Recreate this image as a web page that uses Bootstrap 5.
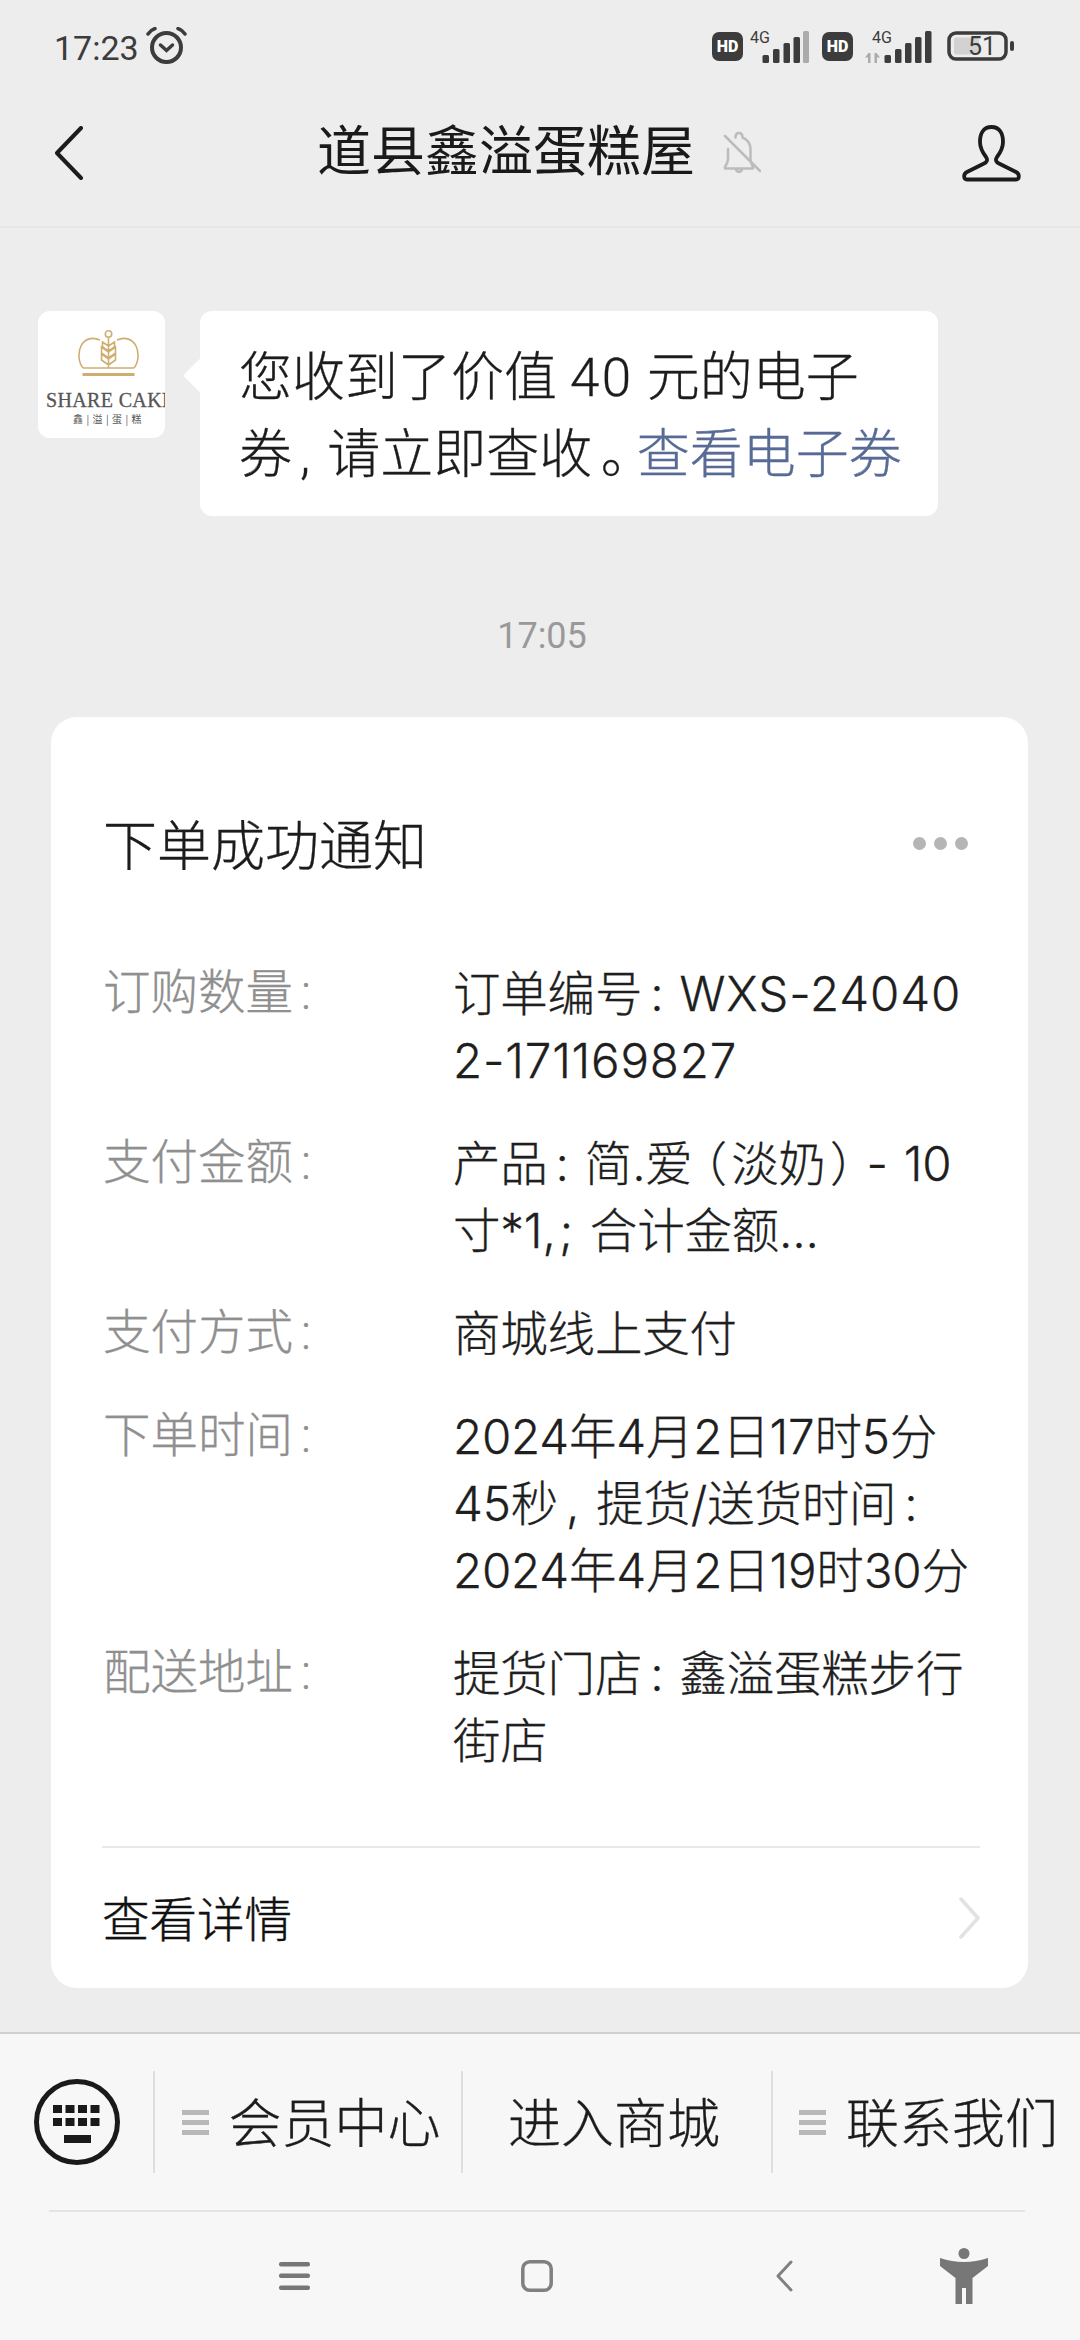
<!DOCTYPE html>
<html lang="zh-CN">
<head>
<meta charset="utf-8">
<title>道县鑫溢蛋糕屋</title>
<link href="https://cdn.jsdelivr.net/npm/bootstrap@5.3.0/dist/css/bootstrap.min.css" rel="stylesheet">
<style>
html,body{margin:0;padding:0;width:1080px;height:2340px;overflow:hidden}
body{background:#ededed;color:#1c1c1c;font-family:Roboto,"Noto Sans CJK SC",sans-serif}
.phone{width:1080px;height:2340px}
.status{height:88px;padding:5px 66px 0 54px;color:#3c3c3c}
.clock{font-size:34px;line-height:1;padding-top:2px}
.alarm{margin-left:7px;margin-top:-3px}
.hd{width:31px;height:29px;border-radius:7px;background:#3c3c3c;color:#fff;font-size:16px;font-weight:900;line-height:29px;text-align:center;margin-top:-1px}
.sig1{margin-left:7px;margin-right:13px;margin-top:-6px}
.sig2{margin-left:12px;margin-right:15px;margin-top:-6px}
.batt{width:67px;height:30px;margin-top:-1px}
.topbar{height:140px;border-bottom:2px solid #e6e6e6;padding:0 59px 8px 54px;display:grid;grid-template-columns:1fr auto 1fr;align-items:center}
.ttl{font-size:54px;line-height:60px;color:#1a1a1a;margin-left:3px}
.bell{margin-left:28px;margin-top:-3px}
.chat{padding-top:83px;height:1804px}
.msg{padding-left:38px;gap:35px}
.ava{width:127px;height:127px;border-radius:12px;background:#fff;overflow:hidden;padding-top:19px;flex:none}
.ava svg{margin-left:40px;display:block}
.ava-en{font-family:"Liberation Serif",serif;font-size:20px;line-height:20px;color:#555;white-space:nowrap;margin-left:8px;margin-top:14px;letter-spacing:.35px;-webkit-text-stroke:.3px #555}
.ava-cn{font-family:"Noto Sans CJK SC",sans-serif;font-size:10px;line-height:12px;color:#555;white-space:nowrap;margin-left:35px;margin-top:3px;letter-spacing:3.4px}
.bub{position:relative;width:738px;height:205px;background:#fff;border-radius:12px;padding:29px 30px 0 39px;font-size:53px;line-height:77px;color:#1c1c1c;white-space:nowrap;font-weight:300;-webkit-text-stroke:.3px currentColor}
.bub::before{content:"";position:absolute;left:-12px;top:52px;width:25px;height:25px;background:#fff;transform:rotate(45deg);border-radius:3px}
.bub a{color:#576b95;text-decoration:none}
.pa{padding:0 17px 0 8px}
.pb{padding:0 9px 0 9px}
.colon{padding:0 16px 0 8px}
.comma{padding:0 17px 0 8px}
.open{font-feature-settings:"palt";padding:0 6px 0 9px}
.close{font-feature-settings:"palt";padding:0 11px 0 6px}
.dash{padding-right:3px}
.nbr{letter-spacing:2.5px}
.wide1{letter-spacing:.9px}
.wide2{letter-spacing:.8px}
.wide3{letter-spacing:3.5px}
.when{margin-top:95px;height:50px;line-height:50px;font-size:36px;color:#999;text-align:center;padding-left:4px}
.notice{margin:56px 0 0 51px;width:977px;height:1271px;border-radius:26px;border:0;background:#fff;padding:0}
.nhead{padding:96px 60px 0 52px;height:166px}
.ntitle{font-size:54px;line-height:70px;color:#1c1c1c;font-weight:300;-webkit-text-stroke:.3px #1c1c1c}
.dots{gap:8px;margin-top:-5px}
.dots i{display:block;width:13px;height:13px;border-radius:50%;background:#b5b5b5}
.rows{padding:76.5px 50px 0 52px;gap:36px}
.lbl{width:350px;flex:none;font-size:47.5px;line-height:67px;color:#8f8f8f;font-weight:300;-webkit-text-stroke:.3px #8f8f8f}
.val{flex:1;font-size:47.5px;line-height:67px;color:#1f1f1f;white-space:nowrap;font-family:Inter,"Noto Sans CJK SC",sans-serif;font-weight:300;letter-spacing:-.2px;-webkit-text-stroke:.3px #1f1f1f}
.nfoot{margin:72.5px 48px 0 51px;height:141px;border-top:2px solid #e8e8e8;font-size:47.5px;color:#111;font-weight:300;-webkit-text-stroke:.4px #111}
.nfoot span{padding-top:9px}
.bottom{height:308px;background:#f7f7f7;border-top:2px solid #d0d0d0}
.menu{height:176px}
.kbd{width:153px;flex:none}
.mi{height:102px;border-left:2px solid #dedede;gap:20px;font-size:53px;line-height:60px;color:#1c1c1c;font-weight:300;-webkit-text-stroke:.3px #1c1c1c}
.mi span{padding-top:6px}
.m1{width:308px;padding-left:6px}
.m2{width:310px;padding-right:6px}
.m3{width:309px;padding-left:4px}
.sep{height:2px;background:#e4e4e4;margin:0 55px 0 49px}
.nav3{height:128px;padding-left:279px}
.n2{margin-left:211px}
.n3{margin-left:222px}
.n4{margin-left:147px}
</style>
</head>
<body>
<div class="phone d-flex flex-column">

  <div class="status d-flex align-items-center justify-content-between">
    <div class="d-flex align-items-center">
      <span class="clock">17:23</span>
      <svg class="alarm" width="41" height="37" viewBox="0 0 41 37" fill="none" stroke="#3c3c3c" stroke-linecap="round">
        <circle cx="20.500" cy="20.500" r="14.500" stroke-width="4"/>
        <path d="M14.500 18l6 5.500 6-5.500" stroke-width="3.500"/>
        <path d="M2 7c2-3 4-4.500 7-5.500M39 7c-2-3-4-4.500-7-5.500" stroke-width="3.500"/>
      </svg>
    </div>
    <div class="d-flex align-items-center">
      <div class="hd">HD</div>
      <svg class="sig1" width="59" height="38" viewBox="0 -6 59 38" fill="#3c3c3c">
        <text x="0" y="12" font-family="Roboto,sans-serif" font-size="16">4G</text>
        <rect x="12.500" y="24" width="6.500" height="8" rx="1.500"/>
        <rect x="23" y="18" width="6.500" height="14" rx="1.500"/>
        <rect x="33.500" y="12" width="6.500" height="20" rx="1.500"/>
        <rect x="43.500" y="6" width="6.500" height="26" rx="1.500"/>
        <rect x="53" y="0" width="6" height="32" rx="1.500" fill="#ababab"/>
      </svg>
      <div class="hd">HD</div>
      <svg class="sig2" width="67" height="38" viewBox="0 -6 67 38" fill="#3c3c3c">
        <text x="7" y="12" font-family="Roboto,sans-serif" font-size="16">4G</text>
        <path d="M0 26.500l3.500-4.500h2v10h-2.500v-5.500zM9.500 32v-10h2l3.500 4.500h-3v5.500z" fill="#ababab"/>
        <rect x="19.500" y="24" width="6.500" height="8" rx="1.500"/>
        <rect x="30" y="18" width="6.500" height="14" rx="1.500"/>
        <rect x="40" y="12" width="6.500" height="20" rx="1.500"/>
        <rect x="50" y="6" width="6.500" height="26" rx="1.500"/>
        <rect x="60" y="0" width="6.500" height="32" rx="1.500"/>
      </svg>
      <svg class="batt" width="67" height="30" viewBox="0 0 67 30">
        <rect x="2" y="2" width="57" height="26" rx="7" fill="none" stroke="#3c3c3c" stroke-width="3.500"/>
        <rect x="7" y="6.500" width="25" height="17" rx="2" fill="#d2d2d2"/>
        <text x="21" y="24" font-family="Roboto,sans-serif" font-size="25" fill="#3c3c3c">51</text>
        <rect x="63" y="10" width="4" height="10" rx="2" fill="#3c3c3c"/>
      </svg>
    </div>
  </div>

  <div class="topbar">
    <div>
      <svg class="d-block" width="30" height="54" viewBox="0 0 30 54" fill="none" stroke="#1c1c1c" stroke-width="4" stroke-linecap="round" stroke-linejoin="round"><path d="M27 2L3 27l24 25"/></svg>
    </div>
    <div class="d-flex align-items-center">
      <span class="ttl">道县鑫溢蛋糕屋</span>
      <svg class="bell" width="38" height="42" viewBox="0 0 38 42" fill="none" stroke="#bcbcbc" stroke-width="2.500" stroke-linecap="round" stroke-linejoin="round">
        <path d="M12.500 6.500c0-6 7-6 7 0 5 2 8 6 8 12v10c0 3 1 5 2.500 7.500 .5 1 0 1.500-1 1.500h-26c-1 0-1.500-.5-1-1.500 2-3 3-5 3-8V18"/>
        <path d="M13 38.500c1 3 5 3 6 0"/>
        <path d="M2 5l35 35"/>
      </svg>
    </div>
    <div class="d-flex justify-content-end">
      <svg class="d-block" width="59" height="57" viewBox="0 0 59 57" fill="none" stroke="#1c1c1c" stroke-width="3.800" stroke-linejoin="round"><path d="M29.500 2C21 2 18 9 18 17c0 7 3 11 6 15 2 3 1 5-2 6.500L5 47c-4 2-3.500 7.500 0 7.500h49c3.500 0 4-5.500 0-7.500L37 38.500c-3-1.500-4-3.500-2-6.500 3-4 6-8 6-15 0-8-3-15-11.500-15z"/></svg>
    </div>
  </div>

  <div class="chat">
    <div class="msg d-flex align-items-start">
      <div class="ava">
        <svg width="62" height="46" viewBox="0 0 62 46" fill="none" stroke="#cfae72" stroke-width="1.600">
          <circle cx="30.500" cy="4" r="3.200"/>
          <path d="M5 38C0 32 0 22 3 16c4-8 12-9 19-6M56 38c5-6 5-16 2-22-4-8-12-9-19-6M5 38h51"/>
          <path d="M30.500 8v30M30.500 16l-6-4v5l6 4 6-4v-5zM30.500 22l-7-5v6l7 5 7-5v-6zM30.500 29l-7-5v6l7 5 7-5v-6z"/>
          <rect x="4.500" y="43" width="52" height="3" fill="#cfae72" stroke="none"/>
        </svg>
        <div class="ava-en">SHARE CAKE</div>
        <div class="ava-cn">鑫|溢|蛋|糕</div>
      </div>
      <div class="bub">您收到了价值 <span class="nbr">40</span> 元的电子<br>券<span class="pa">,</span>请立即查收<span class="pb">｡</span><a href="#">查看电子券</a></div>
    </div>

    <div class="when">17:05</div>

    <div class="card notice">
      <div class="nhead d-flex justify-content-between align-items-start">
        <div class="ntitle">下单成功通知</div>
        <div class="dots d-flex align-items-center" style="height:70px"><i></i><i></i><i></i></div>
      </div>
      <div class="rows d-flex flex-column">
        <div class="d-flex"><div class="lbl">订购数量<span class="colon">:</span></div><div class="val">订单编号<span class="colon">:</span><span class="wide1">WXS-24040</span><br><span class="wide2">2-171169827</span></div></div>
        <div class="d-flex"><div class="lbl">支付金额<span class="colon">:</span></div><div class="val">产品<span class="colon">:</span>简.爱<span class="open">（</span>淡奶<span class="close">）</span><span class="dash">-</span> 10<br>寸*1<span class="wide3">,;</span> 合计金额...</div></div>
        <div class="d-flex"><div class="lbl">支付方式<span class="colon">:</span></div><div class="val">商城线上支付</div></div>
        <div class="d-flex"><div class="lbl">下单时间<span class="colon">:</span></div><div class="val">2024年4月2日17时5分<br>45秒<span class="comma">,</span>提货/送货时间<span class="colon">:</span><br>2024年4月2日19时30分</div></div>
        <div class="d-flex"><div class="lbl">配送地址<span class="colon">:</span></div><div class="val">提货门店<span class="colon">:</span>鑫溢蛋糕步行<br>街店</div></div>
      </div>
      <div class="nfoot d-flex justify-content-between align-items-center">
        <span>查看详情</span>
        <svg width="21" height="42" viewBox="0 0 21 42" fill="none" stroke="#e2e2e2" stroke-width="3.500" stroke-linecap="round" stroke-linejoin="round"><path d="M2 2l17 19L2 40"/></svg>
      </div>
    </div>
  </div>

  <div class="bottom">
    <div class="menu d-flex align-items-center">
      <div class="kbd d-flex justify-content-center">
        <svg width="86" height="86" viewBox="0 0 86 86"><circle cx="43" cy="43" r="40.500" fill="none" stroke="#1a1a1a" stroke-width="5"/><g fill="#1a1a1a"><rect x="19" y="26" width="9" height="8"/><rect x="31.500" y="26" width="9" height="8"/><rect x="44" y="26" width="9" height="8"/><rect x="56.500" y="26" width="9" height="8"/><rect x="19" y="39" width="9" height="8"/><rect x="31.500" y="39" width="9" height="8"/><rect x="44" y="39" width="9" height="8"/><rect x="56.500" y="39" width="9" height="8"/><rect x="30" y="56" width="27" height="8"/></g></svg>
      </div>
      <div class="mi m1 d-flex align-items-center justify-content-center">
        <svg width="27" height="25" viewBox="0 0 27 25" fill="#b8b8b8"><rect width="27" height="5"/><rect y="10" width="27" height="5"/><rect y="20" width="27" height="5"/></svg>
        <span>会员中心</span>
      </div>
      <div class="mi m2 d-flex align-items-center justify-content-center"><span>进入商城</span></div>
      <div class="mi m3 d-flex align-items-center justify-content-center">
        <svg width="27" height="25" viewBox="0 0 27 25" fill="#b8b8b8"><rect width="27" height="5"/><rect y="10" width="27" height="5"/><rect y="20" width="27" height="5"/></svg>
        <span>联系我们</span>
      </div>
    </div>
    <div class="sep"></div>
    <div class="nav3 d-flex align-items-center">
      <svg width="31" height="28" viewBox="0 0 31 28" fill="#777"><rect width="31" height="4.500" rx="2"/><rect y="11.500" width="31" height="4.500" rx="2"/><rect y="23.500" width="31" height="4.500" rx="2"/></svg>
      <svg class="n2" width="32" height="32" viewBox="0 0 32 32"><rect x="1.800" y="1.800" width="28.400" height="28.400" rx="7" fill="none" stroke="#808080" stroke-width="3.500"/></svg>
      <svg class="n3" width="18" height="32" viewBox="0 0 18 32" fill="none" stroke="#808080" stroke-width="3" stroke-linecap="round" stroke-linejoin="round"><path d="M16 2L3 16l13 14"/></svg>
      <svg class="n4" width="48" height="56" viewBox="0 0 48 56" fill="#777"><circle cx="24" cy="5.500" r="5.500"/><path d="M0 10Q24 18 48 10v8L32.500 30v26h-6.500V40h-4v16h-6.500V30L0 18z"/></svg>
    </div>
  </div>
</div>
<script src="https://cdn.jsdelivr.net/npm/bootstrap@5.3.0/dist/js/bootstrap.bundle.min.js"></script>
</body>
</html>
